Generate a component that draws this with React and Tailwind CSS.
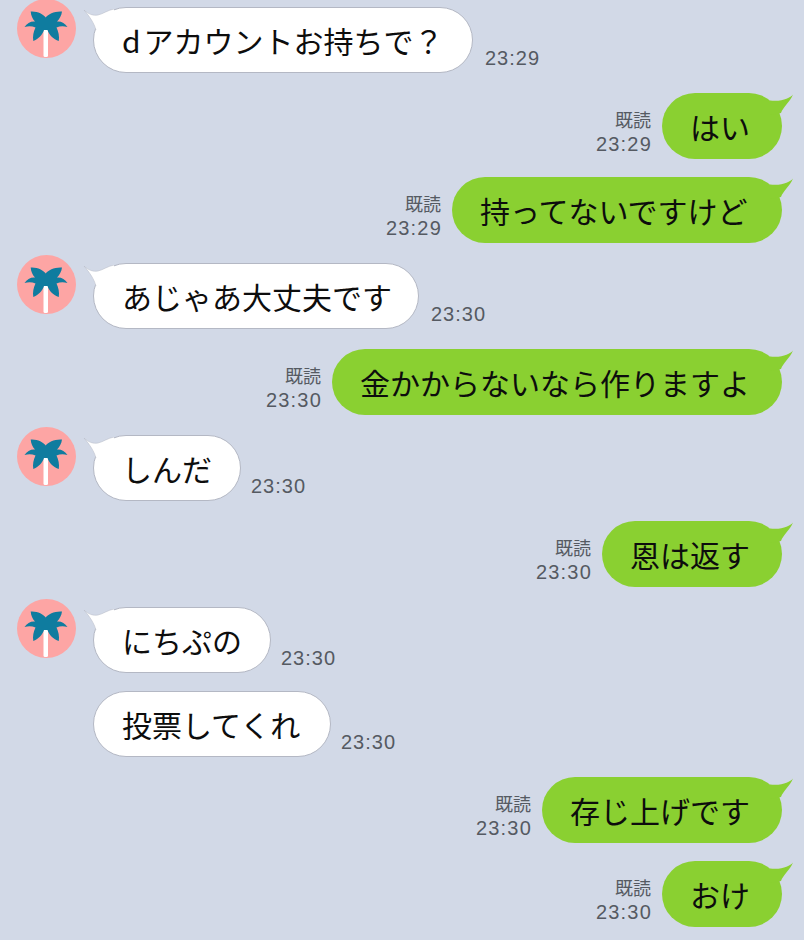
import React from 'react';

const messages = [
  { from: 'them', avatar: true, prefix: 'd', text: 'アカウントお持ちで？', time: '23:29', gap: 'mt-[7px]', width: 'w-[380px]', timeGap: 'ml-[12px]' },
  { from: 'me', text: 'はい', time: '23:29', gap: 'mt-[20px]', width: 'w-[120px]' },
  { from: 'me', text: '持ってないですけど', time: '23:29', gap: 'mt-[18px]', width: 'w-[330px]' },
  { from: 'them', avatar: true, text: 'あじゃあ大丈夫です', time: '23:30', gap: 'mt-[20px]', width: 'w-[326px]', timeGap: 'ml-[12px]' },
  { from: 'me', text: '金かからないなら作りますよ', time: '23:30', gap: 'mt-[20px]', width: 'w-[450px]' },
  { from: 'them', avatar: true, text: 'しんだ', time: '23:30', gap: 'mt-[20px]', width: 'w-[148px]', timeGap: 'ml-[10px]' },
  { from: 'me', text: '恩は返す', time: '23:30', gap: 'mt-[20px]', width: 'w-[180px]' },
  { from: 'them', avatar: true, text: 'にちぷの', time: '23:30', gap: 'mt-[20px]', width: 'w-[178px]', timeGap: 'ml-[10px]' },
  { from: 'them', text: '投票してくれ', time: '23:30', gap: 'mt-[18px]', width: 'w-[238px]', timeGap: 'ml-[10px]' },
  { from: 'me', text: '存じ上げです', time: '23:30', gap: 'mt-[20px]', width: 'w-[240px]' },
  { from: 'me', text: 'おけ', time: '23:30', gap: 'mt-[18px]', width: 'w-[120px]' },
];

function Avatar() {
  return (
    <svg width="60" height="60" viewBox="0 0 60 60" className="shrink-0 block">
      <circle cx="29.5" cy="29.5" r="29.5" fill="#fda5a4" />
      <rect x="26.5" y="28" width="4.5" height="30" rx="1.5" fill="#ffffff" />
      <path
        fill="#0f7c9f"
        d="M28.7 18.5 C26 15 20.5 12 13.7 12.5 C14 16.5 15.5 20 18 22.5 C14 22 10 24 7.5 28 C11.5 27 15 27 18.5 28.5 C16.5 32.5 15.5 37.5 16.3 42 C21 40 25.5 36 27 31 L30.5 31 C32 36 36.5 40 41.8 42 C42.5 37.5 41.5 32.5 39.5 28.5 C43 27 46.5 27 50.5 28 C48 24 44 22 40 22.5 C42.5 20 44.5 16.5 45 12.5 C37.5 12 31.5 15 28.7 18.5 Z"
      />
    </svg>
  );
}

function LeftTail() {
  return (
    <svg width="32" height="26" viewBox="0 0 32 26" className="absolute left-[-11px] top-[1px]">
      <path d="M1 1 C5 5 10 7 15 6 C20 5 25 1 31 0 L31 24 L13 21 C11 14 7 8 1 1 Z" fill="#ffffff" />
      <path d="M1 1 C5 5 10 7 15 6 C20 5 25 1 31 0 M13 21 C11 14 7 8 1 1" fill="none" stroke="#b4b8c4" strokeWidth="0.5" />
    </svg>
  );
}

function RightTail() {
  return (
    <svg width="34" height="24" viewBox="0 0 34 24" className="absolute right-[-12px] top-[0px]">
      <path d="M33 1.5 C30 5 22 9 10 7.5 L10 22 L21 20 C23 14 30 9 33 1.5 Z" fill="#8ad031" />
    </svg>
  );
}

function TheirRow({ m }) {
  return (
    <div className={`flex items-start pl-[17px] ${m.gap}`}>
      <div className="w-[76px] shrink-0 h-[66px]">
        {m.avatar && <div className="-mt-[8px]"><Avatar /></div>}
      </div>
      <div className={`relative h-[66px] flex items-center pl-[28px] rounded-[33px] bg-white border-[0.5px] border-[#b4b8c4] text-[30px] leading-none text-[#0d0d0d] whitespace-nowrap ${m.width}`}>
        {m.avatar && <LeftTail />}
        <span className="relative">
          {m.prefix && <span className="mr-[3px]">{m.prefix}</span>}
          {m.text}
        </span>
      </div>
      <div className={`self-end mb-[3px] text-[20px] leading-[24px] text-[#555a62] tracking-[1px] font-['Liberation_Sans',sans-serif] ${m.timeGap}`}>
        {m.time}
      </div>
    </div>
  );
}

function MyRow({ m }) {
  return (
    <div className={`flex items-start justify-end pr-[22px] ${m.gap}`}>
      <div className="self-end mr-[10px] mb-[3px] flex flex-col items-end text-[#555a62]">
        <span className="text-[18px] leading-[24px] mr-[1px] mb-[1px]">既読</span>
        <span className="text-[20px] leading-[24px] tracking-[1.2px] font-['Liberation_Sans',sans-serif]">{m.time}</span>
      </div>
      <div className={`relative h-[66px] flex items-center pl-[28px] rounded-[33px] bg-[#8ad031] text-[30px] leading-none text-[#0d0d0d] whitespace-nowrap ${m.width}`}>
        <RightTail />
        <span className="relative">{m.text}</span>
      </div>
    </div>
  );
}

export default function App() {
  return (
    <div className="w-[804px] h-[940px] overflow-hidden bg-[#d2d9e7] font-['Noto_Sans_CJK_JP','Noto_Sans',sans-serif]">
      {messages.map((m, i) =>
        m.from === 'me' ? <MyRow key={i} m={m} /> : <TheirRow key={i} m={m} />
      )}
    </div>
  );
}
